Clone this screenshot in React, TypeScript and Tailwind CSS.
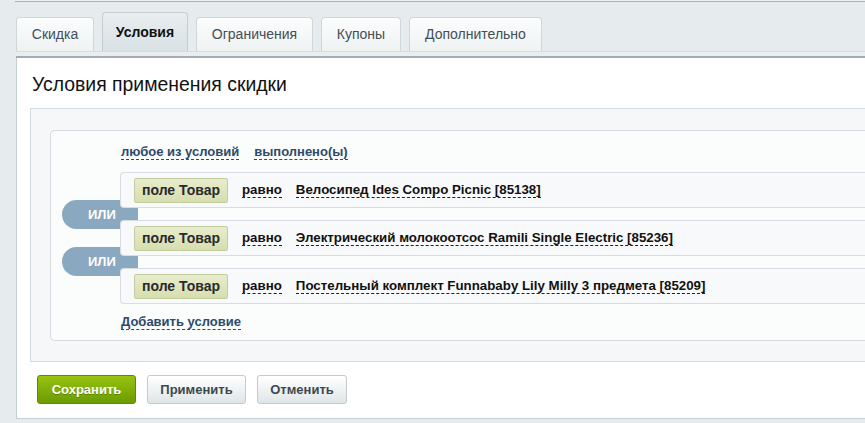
import React from 'react';

const tabs = [
  { label: 'Скидка', w: 'w-[78px]' },
  { label: 'Условия', w: 'w-[86px]', active: true },
  { label: 'Ограничения', w: 'w-[117px]' },
  { label: 'Купоны', w: 'w-[80px]' },
  { label: 'Дополнительно', w: 'w-[133px]' },
];

const conditions = [
  'Велосипед Ides Compo Picnic [85138]',
  'Электрический молокоотсос Ramili Single Electric [85236]',
  'Постельный комплект Funnababy Lily Milly 3 предмета [85209]',
];

function Dashed({ children, className = '' }: { children: React.ReactNode; className?: string }) {
  return (
    <span className={'border-b border-dashed leading-[14px] cursor-pointer ' + className}>{children}</span>
  );
}

export default function App() {
  return (
    <div className="w-[865px] h-[423px] overflow-hidden bg-[#e6ecee] font-['Liberation_Sans',Arial,sans-serif] text-[13px]">
      {/* previous panel edge */}
      <div className="ml-[15px] h-[2px] border-b border-[#a9b3b6] bg-[#eef2f3]" />

      {/* Tabs */}
      <div className="flex items-end gap-[8px] pl-[16px] pt-[10px] text-[14px]">
        {tabs.map((t) =>
          t.active ? (
            <div
              key={t.label}
              className={`${t.w} h-[39px] flex items-center justify-center rounded-t-[4px] border border-b-0 border-[#c4cdd0] bg-gradient-to-b from-[#e9eef0] to-[#d9e1e4] font-bold text-[#111]`}
            >
              {t.label}
            </div>
          ) : (
            <div
              key={t.label}
              className={`${t.w} h-[34px] flex items-center justify-center rounded-t-[4px] border border-b-0 border-[#d0d7da] bg-gradient-to-b from-[#fcfdfd] to-[#eef2f3] text-[#434e54]`}
            >
              {t.label}
            </div>
          )
        )}
      </div>
      <div className="ml-[16px] h-[7px] bg-[#e9eef0] border-t border-[#d6dde0] border-b-2 border-b-[#a3adb1]" />

      {/* Panel */}
      <div className="ml-[16px] bg-white border-l border-b border-[#c5ced1]">
        <div className="h-[50px] pl-[15px] pt-[14px]">
          <h2 className="text-[19.4px] leading-[24px] text-[#111]">Условия применения скидки</h2>
        </div>

        <div className="ml-[13px] bg-[#f5f7f8] border-t border-l border-b border-[#d5dcdf] pt-[21px] pb-[20px] pl-[19px]">
          <div className="relative h-[211px] bg-[#fbfcfc] border border-r-0 border-[#d4dadd] rounded-l-[5px] pt-[13px]">
            {/* ИЛИ connectors */}
            <div className="absolute left-[11px] top-[69px] w-[76px] h-[29px] rounded-l-full bg-[#8aa8bf] text-white font-bold flex items-center pl-[26px]">
              ИЛИ
            </div>
            <div className="absolute left-[11px] top-[116px] w-[76px] h-[29px] rounded-l-full bg-[#8aa8bf] text-white font-bold flex items-center pl-[26px]">
              ИЛИ
            </div>

            <div className="pl-[70px] h-[16px] flex items-center gap-[15px] font-bold text-[#2c4a6c]">
              <Dashed className="border-[#2c4a6c]">любое из условий</Dashed>
              <Dashed className="border-[#2c4a6c]">выполнено(ы)</Dashed>
            </div>

            <div className="mt-[12px] ml-[69px] flex flex-col gap-[12px]">
              {conditions.map((c) => (
                <div
                  key={c}
                  className="relative z-10 h-[36px] flex items-center pl-[13px] bg-[#f8f9fa] border border-r-0 border-[#d6dcdf] rounded-l-[4px] font-bold text-[13.3px] text-[#111]"
                >
                  <div className="h-[25px] w-[94px] flex items-center justify-center rounded-[2px] border border-[#c3cc9c] bg-gradient-to-b from-[#e8edcb] to-[#d6deb0] text-[14px] text-[#2a2a2a]">
                    поле Товар
                  </div>
                  <Dashed className="ml-[14px] border-[#222]">равно</Dashed>
                  <Dashed className="ml-[14px] border-[#222]">{c}</Dashed>
                </div>
              ))}
            </div>

            <div className="mt-[10px] pl-[70px] h-[16px] flex items-center font-bold text-[#2c4a6c]">
              <Dashed className="border-[#2c4a6c]">Добавить условие</Dashed>
            </div>
          </div>
        </div>

        {/* Buttons */}
        <div className="h-[56px] flex items-start gap-[11px] pl-[20px] pt-[13px]">
          <button className="h-[29px] w-[99px] rounded-[3px] border border-[#5d8a00] bg-gradient-to-b from-[#98c311] to-[#6a9b02] text-white font-bold text-[13px] [text-shadow:0_1px_0_rgba(0,0,0,0.25)]">
            Сохранить
          </button>
          <button className="h-[29px] w-[99px] rounded-[3px] border border-[#c3cbce] bg-gradient-to-b from-[#ffffff] to-[#dfe6e8] text-[#3e484d] font-bold text-[13px]">
            Применить
          </button>
          <button className="h-[29px] w-[90px] rounded-[3px] border border-[#c3cbce] bg-gradient-to-b from-[#ffffff] to-[#dfe6e8] text-[#3e484d] font-bold text-[13px]">
            Отменить
          </button>
        </div>
      </div>
    </div>
  );
}
